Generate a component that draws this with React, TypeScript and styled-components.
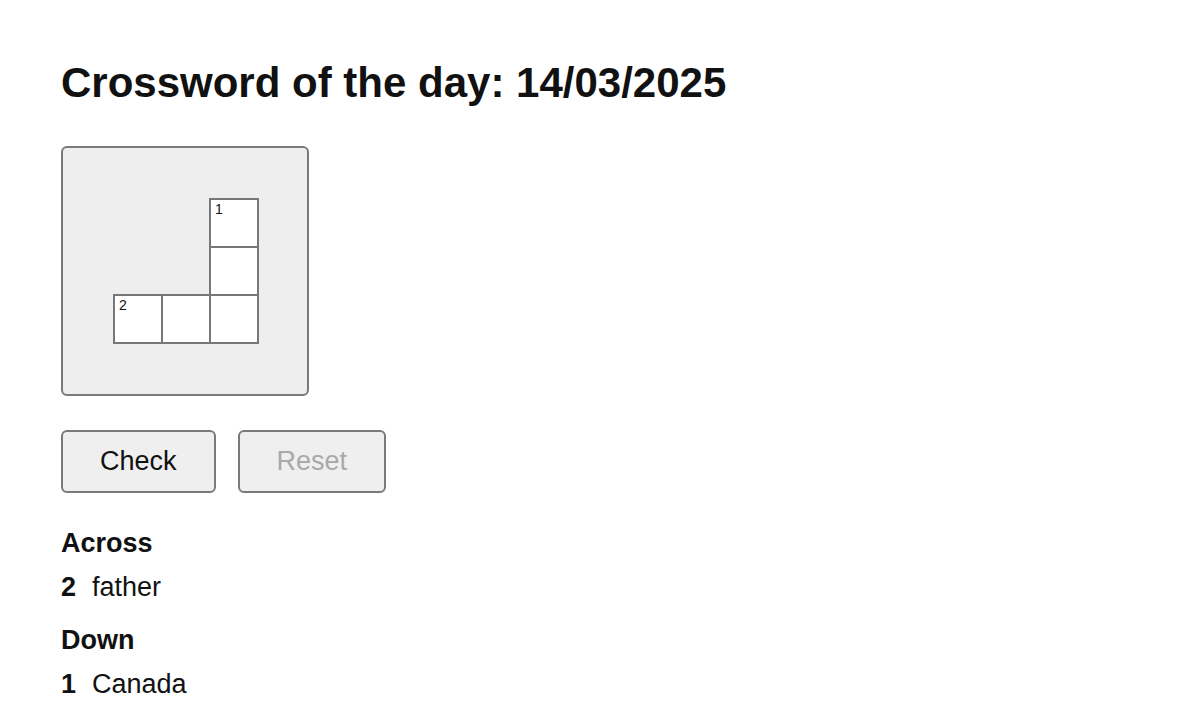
import React from 'react'
import { styled, createGlobalStyle } from 'styled-components'

const GlobalStyle = createGlobalStyle`
  body {
    margin: 0;
    background: #fff;
    color: #111;
    font-family: 'Liberation Sans', Arial, Helvetica, sans-serif;
  }
`

const Page = styled.main`
  display: flex;
  flex-direction: column;
  align-items: flex-start;
  padding: 59px 61px;
`

const Title = styled.h1`
  margin: 0;
  font-size: 42px;
  line-height: 48px;
  font-weight: 700;
`

const Board = styled.div`
  margin-top: 39px;
  padding: 50px 48px 50px 50px;
  background: #eeeeee;
  border: 2px solid #7a7a7a;
  border-radius: 6px;
`

const Grid = styled.div`
  display: grid;
  grid-template-columns: 48px 48px 50px;
  grid-template-rows: 48px 48px 50px;
`

const Cell = styled.div<{ $filled: boolean }>`
  box-sizing: border-box;
  width: 50px;
  height: 50px;
  padding: 2px 4px;
  background: ${(p) => (p.$filled ? '#fff' : 'transparent')};
  border: ${(p) => (p.$filled ? '2px solid #777' : 'none')};
  font-size: 14px;
  line-height: 14px;
  color: #111;
`

const ButtonRow = styled.div`
  display: flex;
  gap: 22px;
  margin-top: 34px;
`

const Button = styled.button`
  height: 63px;
  padding: 0 37px;
  background: #efefef;
  border: 2px solid #7a7a7a;
  border-radius: 6px;
  font-family: inherit;
  font-size: 27px;
  color: #111;

  &:disabled {
    color: #a9a9a9;
  }
`

const Clues = styled.section`
  display: flex;
  flex-direction: column;
  gap: 19px;
  margin-top: 33px;
`

const ClueGroup = styled.div`
  display: flex;
  flex-direction: column;
  gap: 10px;
`

const ClueHeading = styled.h2`
  margin: 0;
  font-size: 27px;
  line-height: 34px;
  font-weight: 700;
`

const ClueRow = styled.div`
  display: flex;
  gap: 16px;
  font-size: 27px;
  line-height: 34px;
`

const ClueNumber = styled.span`
  font-weight: 700;
`

// layout: null = empty square, 0 = blank white cell, n = numbered cell
const layout: (number | null)[][] = [
  [null, null, 1],
  [null, null, 0],
  [2, 0, 0],
]

const clues = [
  { title: 'Across', items: [{ n: 2, text: 'father' }] },
  { title: 'Down', items: [{ n: 1, text: 'Canada' }] },
]

const App = () => {
  return (
    <>
      <GlobalStyle />
      <Page>
        <Title>Crossword of the day: 14/03/2025</Title>

        <Board>
          <Grid>
            {layout.flat().map((v, i) => (
              <Cell key={i} $filled={v !== null}>
                {v ? v : null}
              </Cell>
            ))}
          </Grid>
        </Board>

        <ButtonRow>
          <Button>Check</Button>
          <Button disabled>Reset</Button>
        </ButtonRow>

        <Clues>
          {clues.map((group) => (
            <ClueGroup key={group.title}>
              <ClueHeading>{group.title}</ClueHeading>
              {group.items.map((c) => (
                <ClueRow key={c.n}>
                  <ClueNumber>{c.n}</ClueNumber>
                  <span>{c.text}</span>
                </ClueRow>
              ))}
            </ClueGroup>
          ))}
        </Clues>
      </Page>
    </>
  )
}

export default App
